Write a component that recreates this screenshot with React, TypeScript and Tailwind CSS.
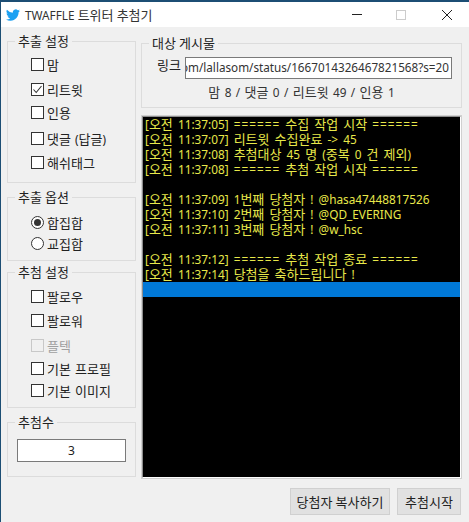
import type { ReactNode } from "react";

const FONT = "font-['Noto_Sans','Noto_Sans_CJK_KR',sans-serif]";

const LOG = [
  "[오전 11:37:05] ====== 수집 작업 시작 ======",
  "[오전 11:37:07] 리트윗 수집완료 -> 45",
  "[오전 11:37:08] 추첨대상 45 명 (중복 0 건 제외)",
  "[오전 11:37:08] ====== 추첨 작업 시작 ======",
  "",
  "[오전 11:37:09] 1번째 당첨자 ! @hasa47448817526",
  "[오전 11:37:10] 2번째 당첨자 ! @QD_EVERING",
  "[오전 11:37:11] 3번째 당첨자 ! @w_hsc",
  "",
  "[오전 11:37:12] ====== 추첨 작업 종료 ======",
  "[오전 11:37:14] 당첨을 축하드립니다 !",
];

// hangul sits larger than latin in the original system font, so size the runs apart
function Txt({ children }: { children: string }) {
  const parts = children.split(/([가-힣]+|=+)/);
  return (
    <>
      {parts.map((p, i) => {
        if (/^[가-힣]/.test(p)) return <span key={i}>{p}</span>;
        if (p.startsWith("=")) return <span key={i} className="text-[11.8px] tracking-[1px]">{p}</span>;
        return <span key={i} className="text-[11.8px]">{p}</span>;
      })}
    </>
  );
}

function Group({ title, className, children }: { title: string; className: string; children: ReactNode }) {
  return (
    <fieldset className={`border border-[#dcdcdc] ${className}`}>
      <legend className="ml-[7px] px-[3px] leading-[16px] text-[#222] [word-spacing:0px]">
        <Txt>{title}</Txt>
      </legend>
      {children}
    </fieldset>
  );
}

function Check({ label, checked, disabled, className }: { label: string; checked?: boolean; disabled?: boolean; className: string }) {
  return (
    <div className={`flex h-[13px] items-center gap-[3px] ${className}`}>
      <span className={`flex h-[13px] w-[13px] items-center justify-center border ${disabled ? "border-[#c8c8c8] bg-[#f0f0f0]" : "border-[#333] bg-white"}`}>
        {checked && (
          <svg viewBox="0 0 11 11" className="h-[11px] w-[11px]" fill="none" stroke="#333" strokeWidth="1.1">
            <path d="M1.5 5.5 L4.2 8.5 L9.5 2" />
          </svg>
        )}
      </span>
      <span className={`whitespace-nowrap leading-[16px] [word-spacing:1px] ${disabled ? "text-[#a0a0a0]" : "text-[#222]"}`}>
        <Txt>{label}</Txt>
      </span>
    </div>
  );
}

function Radio({ label, checked, className }: { label: string; checked?: boolean; className: string }) {
  return (
    <div className={`flex h-[13px] items-center gap-[3px] ${className}`}>
      <span className="flex h-[13px] w-[13px] items-center justify-center rounded-full border border-[#333] bg-white">
        {checked && <span className="h-[7px] w-[7px] rounded-full bg-[#333]" />}
      </span>
      <span className="leading-[16px] text-[#222]">
        <Txt>{label}</Txt>
      </span>
    </div>
  );
}

function WinButton({ label, className }: { label: string; className: string }) {
  return (
    <button className={`h-[27px] border border-[#d0d0d0] bg-[#e1e1e1] leading-[16px] text-[#222] ${className}`}>
      <Txt>{label}</Txt>
    </button>
  );
}

export default function App() {
  return (
    <div className={`flex h-[522px] w-[469px] flex-col overflow-hidden border-l border-t-2 border-[#1c4e74] bg-[#f0f0f0] text-[13px] ${FONT}`}>
      <div className="flex h-[25px] shrink-0 items-center bg-white pl-[5px]">
        <svg viewBox="0 0 24 24" className="h-[14px] w-[14px]" fill="#1da1f2">
          <path d="M23.95 4.57a10 10 0 0 1-2.82.77 4.96 4.96 0 0 0 2.16-2.72c-.95.55-2 .95-3.12 1.18a4.92 4.92 0 0 0-8.38 4.48A13.96 13.96 0 0 1 1.64 3.16a4.92 4.92 0 0 0 1.52 6.57 4.9 4.9 0 0 1-2.23-.61v.06a4.92 4.92 0 0 0 3.95 4.83 5 5 0 0 1-2.21.08 4.94 4.94 0 0 0 4.6 3.42A9.87 9.87 0 0 1 0 19.54a13.94 13.94 0 0 0 7.55 2.21c9.06 0 14-7.5 14-13.98 0-.21 0-.42-.02-.63A9.94 9.94 0 0 0 24 4.59z" />
        </svg>
        <span className="ml-[5px] leading-[16px] text-[#333]">
          <Txt>TWAFFLE 트위터 추첨기</Txt>
        </span>
        <div className="ml-auto flex items-center">
          <span className="h-px w-[10px] bg-[#222]" />
          <span className="ml-[34px] h-[10px] w-[10px] border border-[#ccc]" />
          <svg viewBox="0 0 10 10" className="ml-[36px] mr-[17px] h-[10px] w-[10px]" stroke="#222" strokeWidth="1">
            <path d="M0 0 L10 10 M10 0 L0 10" />
          </svg>
        </div>
      </div>

      <div className="flex min-h-0 flex-1 gap-[5px] pl-[6px] pr-[7px]">
        <div className="flex w-[129px] shrink-0 flex-col pt-[6px]">
          <Group title="추출 설정" className="h-[150px]">
            <div className="pl-[23px]">
              <Check label="맘" className="mt-[9px]" />
              <Check label="리트윗" checked className="mt-[12px]" />
              <Check label="인용" className="mt-[10px]" />
              <Check label="댓글 (답글)" className="mt-[13px]" />
              <Check label="해쉬태그" className="mt-[11px]" />
            </div>
          </Group>
          <Group title="추출 옵션" className="mt-[6px] h-[72px]">
            <div className="pl-[23px]">
              <Radio label="합집합" checked className="mt-[11px]" />
              <Radio label="교집합" className="mt-[8px]" />
            </div>
          </Group>
          <Group title="추첨 설정" className="mt-[3px] h-[144px]">
            <div className="pl-[23px]">
              <Check label="팔로우" className="mt-[10px]" />
              <Check label="팔로워" className="mt-[11px]" />
              <Check label="플텍" disabled className="mt-[12px]" />
              <Check label="기본 프로필" className="mt-[10px]" />
              <Check label="기본 이미지" className="mt-[9px]" />
            </div>
          </Group>
          <Group title="추첨수" className="mt-[6px] h-[63px]">
            <div className="px-[9px]">
              <div className="mt-[9px] flex h-[23px] items-center justify-center border border-[#7a7a7a] bg-white text-[12px] text-[#222]">
                3
              </div>
            </div>
          </Group>
        </div>

        <div className="flex min-w-0 flex-1 flex-col pt-[8px]">
          <Group title="대상 게시물" className="h-[73px]">
            <div className="mt-[6px] flex items-start gap-[4px] pl-[15px]">
              <span className="shrink-0 leading-[16px] text-[#222]">
                <Txt>링크</Txt>
              </span>
              <div className="flex h-[22px] w-[267px] items-center justify-end overflow-hidden whitespace-nowrap border border-[#7a7a7a] bg-white pr-[2px] text-[11.7px] text-[#333]">
                <span className="shrink-0">https://twitter.com/lallasom/status/1667014326467821568?s=20</span>
              </div>
            </div>
            <p className="mt-[4px] text-center leading-[18px] text-[#333] [word-spacing:1.3px]">
              <Txt>맘 8 / 댓글 0 / 리트윗 49 / 인용 1</Txt>
            </p>
          </Group>

          <div className="mt-[7px] h-[364px] border border-[#d0d0d0]">
            <div className="h-full border border-[#8c8c8c] border-b-white border-r-white bg-black">
              {LOG.map((line, i) => (
                <div key={i} className="h-[15px] whitespace-nowrap pl-[2px] leading-[15px] text-[#e8e84a] [word-spacing:2px]">
                  <Txt>{line}</Txt>
                </div>
              ))}
              <div className="h-[15px] bg-[#0078d7]" />
            </div>
          </div>

          <div className="mt-[9px] flex justify-end gap-[7px] pr-[1px]">
            <WinButton label="당첨자 복사하기" className="w-[100px]" />
            <WinButton label="추첨시작" className="w-[64px]" />
          </div>
        </div>
      </div>
    </div>
  );
}
